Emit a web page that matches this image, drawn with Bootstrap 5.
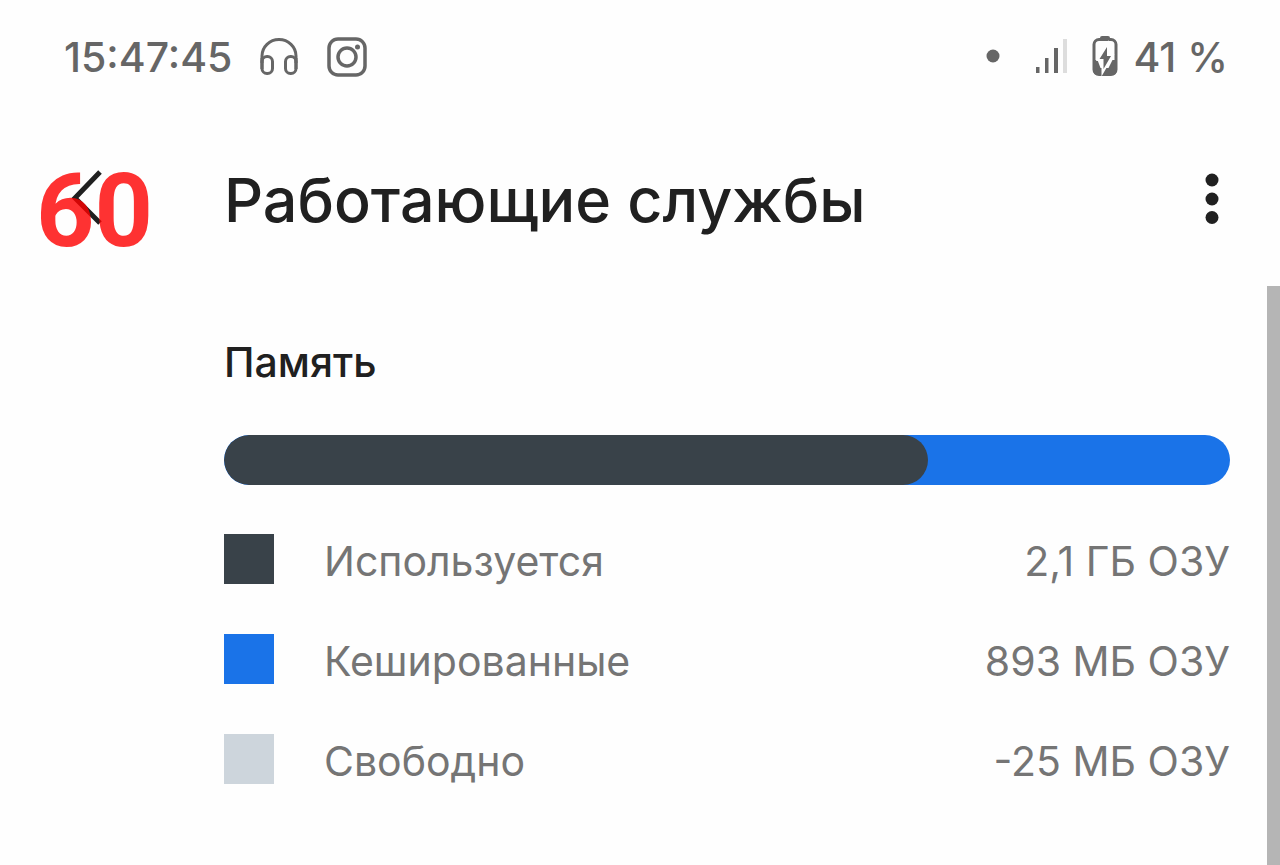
<!DOCTYPE html>
<html lang="ru">
<head>
<meta charset="utf-8">
<meta name="viewport" content="width=device-width, initial-scale=1">
<title>Работающие службы</title>
<link href="https://cdn.jsdelivr.net/npm/bootstrap@5.3.0/dist/css/bootstrap.min.css" rel="stylesheet">
<style>
  body { font-family: Inter, "Liberation Sans", sans-serif; background: #fefefe; color: #202020; }
  .status-bar { height: 112px; padding: 2px 52px 0 64px; color: #666; font-size: 41px; font-weight: 500; line-height: 48px; }
  .status-bar svg { display: block; }
  .status-left { gap: 26px; }
  .app-bar { height: 174px; padding-right: 56px; }
  .lead-col { width: 224px; flex: none; }
  .back-btn { margin-left: 60px; color: #202020; }
  .app-title { font-size: 61px; font-weight: 500; line-height: 72px; padding-top: 2px; }
  .fps-counter { top: 48px; left: 36px; color: #ff0000; opacity: .8; font: 700 102px/102px Roboto, sans-serif; pointer-events: none; }
  .memory { padding: 50px 37px 0 224px; }
  .memory-title { font-size: 41px; font-weight: 500; line-height: 52px; margin-bottom: 47px; }
  .memory-bar { height: 50px; border-radius: 25px; background: #1a73e8; }
  .memory-bar .progress-bar { border-radius: 25px; background: #394249; }
  .legend { margin-top: 49px; color: #757575; font-size: 41px; line-height: 50px; }
  .swatch { width: 50px; height: 50px; }
  .c-used { background: #394249; }
  .c-cached { background: #1a73e8; }
  .c-free { background: #cdd5dc; }
  .legend td, .legend th { padding: 2px 0 48px; font-weight: 400; }
  .legend .swatch-col { width: 100px; padding: 0 0 50px; }
  .scroll-thumb { width: 13px; flex: none; background: #b5b5b5; }
</style>
</head>
<body class="d-flex flex-column min-vh-100">
  <header>
    <div class="status-bar d-flex align-items-center justify-content-between">
      <div class="status-left d-flex align-items-center">
        <time>15:47:45</time>
        <svg width="42" height="42" viewBox="0 0 42 42" fill="none" stroke="#666" stroke-width="3" role="img" aria-label="Наушники">
          <path d="M4 27V20a17 16.500 0 0 1 34 0v7"/>
          <rect x="4" y="20.500" width="10.500" height="17" rx="5"/>
          <rect x="27.500" y="20.500" width="10.500" height="17" rx="5"/>
          <path d="M4 22v11M38 22v11"/>
        </svg>
        <svg width="42" height="42" viewBox="0 0 42 42" fill="none" stroke="#666" stroke-width="3.500" role="img" aria-label="Instagram">
          <rect x="3" y="3" width="36" height="36" rx="9"/>
          <circle cx="21" cy="21" r="9"/>
          <circle cx="31.500" cy="11" r="2.500" fill="#666" stroke="none"/>
        </svg>
      </div>
      <div class="d-flex align-items-center">
        <svg width="148" height="44" viewBox="0 0 148 44" fill="#666" role="img" aria-label="Сигнал сети и зарядка">
          <circle cx="12" cy="21" r="6.500"/>
          <rect x="55" y="32" width="3.500" height="6"/>
          <rect x="64" y="23" width="3.500" height="15"/>
          <rect x="73" y="13" width="4" height="25"/>
          <rect x="82" y="4" width="4" height="34" fill="#ddd"/>
          <rect x="119" y="1" width="10" height="5" rx="2"/>
          <rect x="113" y="4.500" width="22" height="35" rx="5" fill="none" stroke="#666" stroke-width="3"/>
          <path d="M112.500 25h4l3 8h8l4-8h4v11a4 4 0 0 1-4 4h-15a4 4 0 0 1-4-4z"/>
          <path d="M126 12l-7.500 12h4v10l7.500-13h-4z" stroke="#fefefe" stroke-width="4" paint-order="stroke"/>
        </svg>
        <span class="ms-1">41 %</span>
      </div>
    </div>
    <div class="app-bar position-relative d-flex align-items-center">
      <div class="lead-col">
        <button type="button" class="back-btn btn border-0 p-0" aria-label="Назад">
          <svg class="d-block" width="48" height="60" viewBox="0 0 48 60" fill="none" stroke="#202020" stroke-width="5"><path d="M40 3L15 29l25 25"/></svg>
        </button>
      </div>
      <h1 class="app-title m-0 me-auto">Работающие службы</h1>
      <button type="button" class="btn border-0 p-0" aria-label="Ещё">
        <svg class="d-block" width="24" height="56" viewBox="0 0 24 56" fill="#202020"><circle cx="12" cy="9" r="6.500"/><circle cx="12" cy="28" r="6.500"/><circle cx="12" cy="46.500" r="6.500"/></svg>
      </button>
      <span class="fps-counter position-absolute">60</span>
    </div>
  </header>
  <main class="flex-grow-1 d-flex">
    <section class="memory flex-grow-1">
      <h2 class="memory-title">Память</h2>
      <div class="progress memory-bar">
        <div class="progress-bar" role="progressbar" aria-label="Используется" aria-valuenow="70" aria-valuemin="0" aria-valuemax="100" style="width: 70%"></div>
      </div>
      <table class="legend w-100">
        <tbody>
          <tr><td class="swatch-col"><div class="swatch c-used"></div></td><th scope="row">Используется</th><td class="text-end">2,1 ГБ ОЗУ</td></tr>
          <tr><td class="swatch-col"><div class="swatch c-cached"></div></td><th scope="row">Кешированные</th><td class="text-end">893 МБ ОЗУ</td></tr>
          <tr><td class="swatch-col"><div class="swatch c-free"></div></td><th scope="row">Свободно</th><td class="text-end">-25 МБ ОЗУ</td></tr>
        </tbody>
      </table>
    </section>
    <div class="scroll-thumb"></div>
  </main>
  <script src="https://cdn.jsdelivr.net/npm/bootstrap@5.3.0/dist/js/bootstrap.bundle.min.js"></script>
</body>
</html>
